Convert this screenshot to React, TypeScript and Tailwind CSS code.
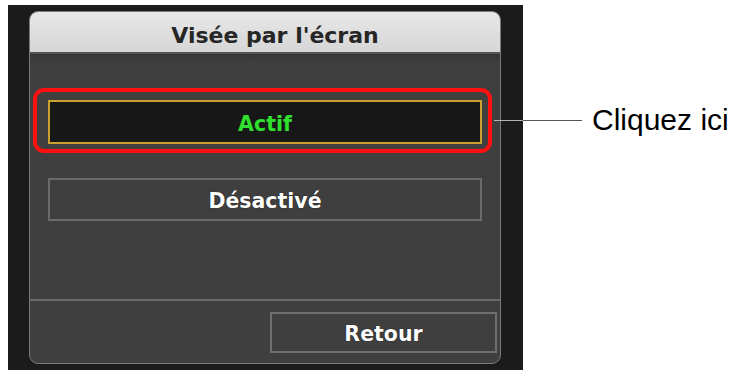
import React from "react";

const font = { fontFamily: '"DejaVu Sans", sans-serif' };

export default function App() {
  return (
    <div className="relative w-[735px] h-[376px] bg-white flex items-start pt-[5px] pl-[8px]">
      <div className="w-[515px] h-[365px] bg-[#1b1b1b] pl-[21px] pt-[6px]" style={font}>
        <div className="w-[472px] h-[353px] rounded-[9px] bg-[#3f3f3f] border border-[#7a7a7a] flex flex-col overflow-hidden">
          <div className="h-[42px] shrink-0 bg-gradient-to-b from-[#e8e8e8] to-[#d6d6d6] border-b-2 border-[#555] flex justify-center pl-[20px] pt-[13px]">
            <span className="text-[22px] leading-[22px] font-bold text-[#262626]">Visée par l&apos;écran</span>
          </div>
          <div className="flex-1 flex flex-col px-[18px] pt-[46px] bg-gradient-to-b from-[#363636] via-[#3f3f3f] to-[#3f3f3f] bg-[length:100%_20px] bg-no-repeat">
            <div className="relative">
              <div className="h-[44px] bg-[#171717] border-2 border-[#c9a12c] flex items-center justify-center">
                <span className="text-[20.5px] leading-[20px] font-bold text-[#2fe02f] mt-[3px]">Actif</span>
              </div>
              <div className="absolute left-[-15px] top-[-12px] right-[-10px] bottom-[-9px] border-4 border-[#ff1010] rounded-[11px]" />
            </div>
            <div className="mt-[34px] h-[43px] border-2 border-[#6a6a6a] flex items-center justify-center">
              <span className="text-[20.5px] leading-[20px] font-bold text-white mt-[2px] [text-shadow:0_0_1px_#000]">Désactivé</span>
            </div>
          </div>
          <div className="h-[2px] bg-[#6a6a6a] shrink-0" />
          <div className="h-[62px] shrink-0 flex justify-end pr-[3px] pt-[11px]">
            <div className="w-[227px] h-[41px] border-2 border-[#6e6e6e] flex items-center justify-center">
              <span className="text-[20.5px] leading-[20px] font-bold text-white mt-[2px] [text-shadow:0_0_1px_#000]">Retour</span>
            </div>
          </div>
        </div>
      </div>
      <div className="absolute left-[494px] top-[120px] w-[29px] h-px bg-[#b5b5b5]" />
      <div className="absolute left-[523px] top-[120px] w-[59px] h-px bg-[#555555]" />
      <div className="ml-[69px] mt-[100px] text-[30px] leading-[30px] text-black" style={{ fontFamily: '"Liberation Sans", Arial, sans-serif' }}>
        Cliquez ici
      </div>
    </div>
  );
}
